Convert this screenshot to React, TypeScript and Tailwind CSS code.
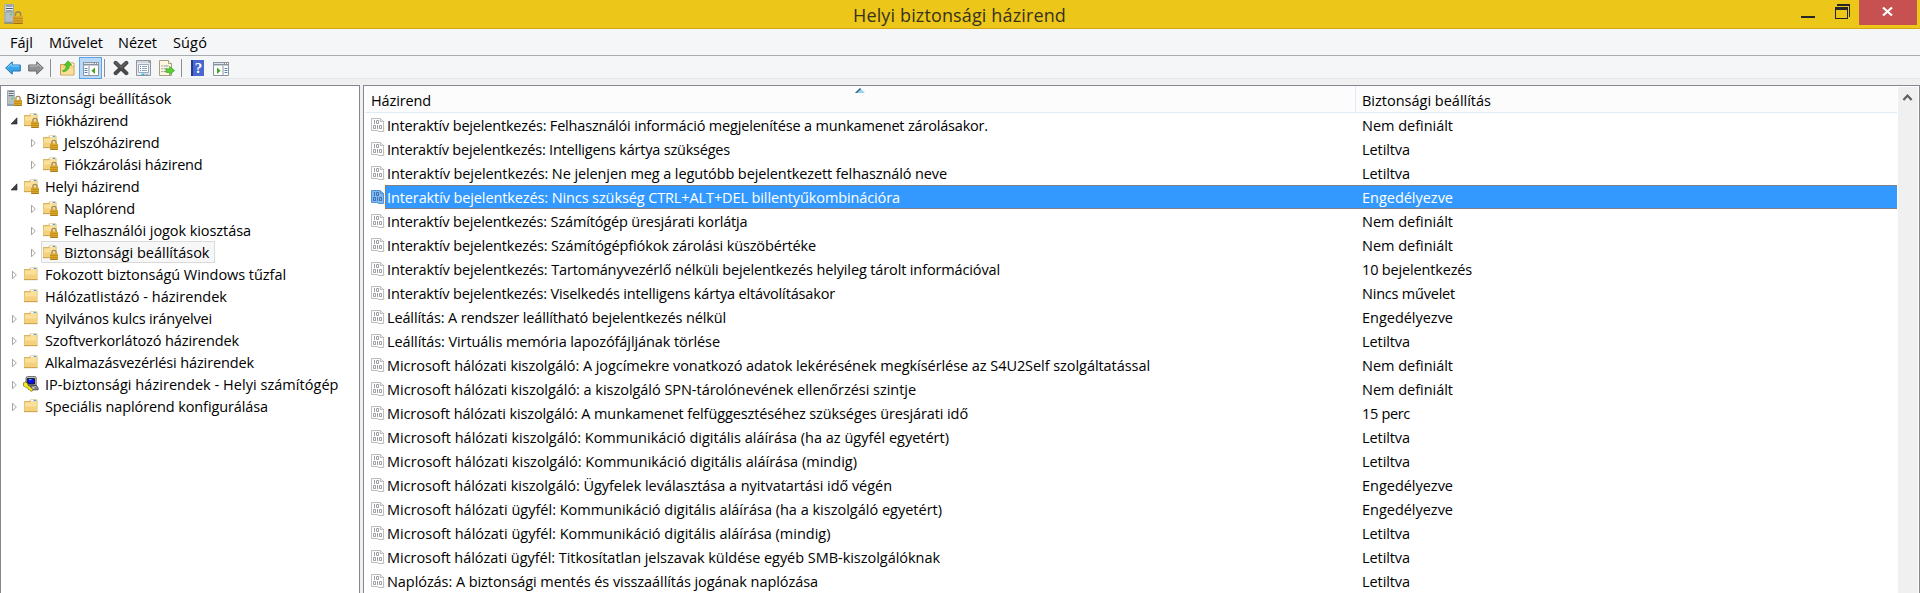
import { useLayoutEffect, useRef } from "react";

/* Text run whose tracking is adjusted so that it occupies the given width. */
function Fit({ text, w, className = "" }: { text: string; w: number; className?: string }) {
  const ref = useRef<HTMLSpanElement>(null);
  useLayoutEffect(() => {
    const el = ref.current;
    if (!el) return;
    el.style.letterSpacing = "0px";
    const natural = el.getBoundingClientRect().width;
    el.style.letterSpacing = `${(w - natural) / text.length}px`;
  }, [text, w]);
  return (
    <span ref={ref} className={`inline-block whitespace-pre ${className}`}>
      {text}
    </span>
  );
}

function Lock() {
  return (
    <g>
      <path d="M9.9 10V8.4a2.1 2.1 0 0 1 4.2 0V10" fill="none" stroke="#a08a58" strokeWidth="1.3" />
      <rect x="8" y="9.8" width="8" height="6" rx=".5" fill="#dba62c" />
      <path d="M8 11.5h8M8 13.5h8" stroke="#b98714" strokeWidth=".7" />
      <path d="M8.3 15.5h7.4" stroke="#94690e" strokeWidth=".8" />
    </g>
  );
}

function ServerIcon({ size }: { size: number }) {
  return (
    <svg width={size} height={size} viewBox="0 0 16 16">
      <path d="M1 .5 2.2 0H8l.8.6V15.2H1z" fill="#9da9b4" />
      <path d="M2 .8h6v5.6H2z" fill="#e8eef2" />
      <path d="M2.4 1.6h5.4M2.4 3.6h5.4M2.4 5.6h5.4" stroke="#4c5a66" strokeWidth=".9" />
      <path d="M2 7h6v7H2z" fill="#b4bfc8" />
      <path d="M1 15.3h7.6" stroke="#6d7a86" strokeWidth=".8" />
      <rect x="5.8" y="7.8" width="1.5" height="1.3" fill="#5bd02d" />
      <Lock />
    </svg>
  );
}

function FolderIcon({ lock = false }: { lock?: boolean }) {
  return (
    <svg width="16" height="16" viewBox="0 0 16 16">
      <path d="M1 3h5.4l1-1.6h6.4l.7.8V14H1z" fill="#dcb562" />
      <path d="M8 2h5.4v1.4H7.4z" fill="#fff" />
      <path d="M10.6 2.4h2.4" stroke="#3d9ae8" strokeWidth="1" />
      <path d="M1.7 4.2h5.9l1-.8h5.2v9.9H1.7z" fill="#fbe09a" />
      <path d="M1.7 8.5h12.1v4.8H1.7z" fill="#f5d17d" />
      <path d="M1 13.7h13.4" stroke="#c0953f" strokeWidth=".8" />
      {lock && <Lock />}
    </svg>
  );
}

function IpIcon() {
  return (
    <svg width="16" height="16" viewBox="0 0 16 16">
      <path d="M3 1.5 4.5.4H12l1.2 1v8H3z" fill="#c4c4c4" stroke="#333" strokeWidth=".7" />
      <path d="M4.3 2.6h7.2V8H4.3z" fill="#0a14e0" stroke="#111" strokeWidth=".9" />
      <path d="M6 3.6h2.5" stroke="#5ad5ff" strokeWidth=".9" />
      <path d="m7.5 10 6-.5 1.6 2.6v1.7H9z" fill="#bbb" stroke="#222" strokeWidth=".8" />
      <path d="M11.5 12h2.4" stroke="#222" strokeWidth=".8" />
      <path d="M.4 6.8 2.6 6l2.2 1.6.2 1.8 5 3.8-.5 1.6-1.6.6-1-1.5-1.5-.3-.7-1.5-1.8-.6-1-.9-1.4-.6z" fill="#f6ec1c" stroke="#3d3900" strokeWidth=".5" />
    </svg>
  );
}

function BinaryIcon({ active }: { active: boolean }) {
  return (
    <svg width="13" height="14" viewBox="0 0 13 14" className="shrink-0">
      <path
        d="M.5.5h8.5l3.5 3v10h-5l-1.5-1H.5z"
        fill={active ? "#7db9f5" : "#fff"}
        stroke={active ? "#5593d3" : "#bdbdbf"}
      />
      <path d="M9.5.8v2.7h3" fill="none" stroke={active ? "#5593d3" : "#bdbdbf"} />
      <g fill="none" stroke={active ? "#3f6fae" : "#9c9ca2"}>
        <path d="M3.5 2v4" />
        <path d="M5.5 2.5h2v3h-2z" />
        <path d="M2.5 7.5h2v3h-2z" />
        <path d="M6.5 7v4" />
        <path d="M8.5 7.5h2v3h-2z" />
      </g>
    </svg>
  );
}

type Node = { level: number; text: string; w: number; arrow?: "open" | "closed"; icon: "server" | "lock" | "folder" | "ip"; selected?: boolean };

const tree: Node[] = [
  { level: 0, text: "Biztonsági beállítások", w: 145.5, icon: "server" },
  { level: 1, text: "Fiókházirend", w: 83, arrow: "open", icon: "lock" },
  { level: 2, text: "Jelszóházirend", w: 95.5, arrow: "closed", icon: "lock" },
  { level: 2, text: "Fiókzárolási házirend", w: 138.5, arrow: "closed", icon: "lock" },
  { level: 1, text: "Helyi házirend", w: 94.5, arrow: "open", icon: "lock" },
  { level: 2, text: "Naplórend", w: 71, arrow: "closed", icon: "lock" },
  { level: 2, text: "Felhasználói jogok kiosztása", w: 187, arrow: "closed", icon: "lock" },
  { level: 2, text: "Biztonsági beállítások", w: 145.5, arrow: "closed", icon: "lock", selected: true },
  { level: 1, text: "Fokozott biztonságú Windows tűzfal", w: 241, arrow: "closed", icon: "folder" },
  { level: 1, text: "Hálózatlistázó - házirendek", w: 182, icon: "folder" },
  { level: 1, text: "Nyilvános kulcs irányelvei", w: 167, arrow: "closed", icon: "folder" },
  { level: 1, text: "Szoftverkorlátozó házirendek", w: 194, arrow: "closed", icon: "folder" },
  { level: 1, text: "Alkalmazásvezérlési házirendek", w: 209, arrow: "closed", icon: "folder" },
  { level: 1, text: "IP-biztonsági házirendek - Helyi számítógép", w: 293.5, arrow: "closed", icon: "ip" },
  { level: 1, text: "Speciális naplórend konfigurálása", w: 223, arrow: "closed", icon: "folder" },
];

const indent = ["pl-0", "pl-[9px]", "pl-[28px]"];

const valueWidths: Record<string, number> = {
  "Nem definiált": 91,
  Letiltva: 48,
  Engedélyezve: 91,
  "10 bejelentkezés": 110,
  "Nincs művelet": 93,
  "15 perc": 48,
};

const policies: [string, number, string][] = [
  ["Interaktív bejelentkezés: Felhasználói információ megjelenítése a munkamenet zárolásakor.", 601, "Nem definiált"],
  ["Interaktív bejelentkezés: Intelligens kártya szükséges", 343, "Letiltva"],
  ["Interaktív bejelentkezés: Ne jelenjen meg a legutóbb bejelentkezett felhasználó neve", 560, "Letiltva"],
  ["Interaktív bejelentkezés: Nincs szükség CTRL+ALT+DEL billentyűkombinációra", 513, "Engedélyezve"],
  ["Interaktív bejelentkezés: Számítógép üresjárati korlátja", 360.5, "Nem definiált"],
  ["Interaktív bejelentkezés: Számítógépfiókok zárolási küszöbértéke", 429, "Nem definiált"],
  ["Interaktív bejelentkezés: Tartományvezérlő nélküli bejelentkezés helyileg tárolt információval", 613, "10 bejelentkezés"],
  ["Interaktív bejelentkezés: Viselkedés intelligens kártya eltávolításakor", 448, "Nincs művelet"],
  ["Leállítás: A rendszer leállítható bejelentkezés nélkül", 339, "Engedélyezve"],
  ["Leállítás: Virtuális memória lapozófájljának törlése", 333, "Letiltva"],
  ["Microsoft hálózati kiszolgáló: A jogcímekre vonatkozó adatok lekérésének megkísérlése az S4U2Self szolgáltatással", 763, "Nem definiált"],
  ["Microsoft hálózati kiszolgáló: a kiszolgáló SPN-tárolónevének ellenőrzési szintje", 529, "Nem definiált"],
  ["Microsoft hálózati kiszolgáló: A munkamenet felfüggesztéséhez szükséges üresjárati idő", 581, "15 perc"],
  ["Microsoft hálózati kiszolgáló: Kommunikáció digitális aláírása (ha az ügyfél egyetért)", 562, "Letiltva"],
  ["Microsoft hálózati kiszolgáló: Kommunikáció digitális aláírása (mindig)", 470, "Letiltva"],
  ["Microsoft hálózati kiszolgáló: Ügyfelek leválasztása a nyitvatartási idő végén", 505, "Engedélyezve"],
  ["Microsoft hálózati ügyfél: Kommunikáció digitális aláírása (ha a kiszolgáló egyetért)", 555, "Engedélyezve"],
  ["Microsoft hálózati ügyfél: Kommunikáció digitális aláírása (mindig)", 443.5, "Letiltva"],
  ["Microsoft hálózati ügyfél: Titkosítatlan jelszavak küldése egyéb SMB-kiszolgálóknak", 553, "Letiltva"],
  ["Naplózás: A biztonsági mentés és visszaállítás jogának naplózása", 431, "Letiltva"],
];

function TitleBar() {
  return (
    <header className="flex h-[29px] shrink-0 items-start border-b border-[#d1a516] bg-[#edc61a]">
      <div className="w-[105px] pt-[4px] pl-[3px]">
        <ServerIcon size={20} />
      </div>
      <h1 className="flex-1 pl-[13px] text-center text-[18px] leading-[31px] text-[#38331a]">
        <Fit text="Helyi biztonsági házirend" w={213} />
      </h1>
      <div className="flex h-[25px] pr-[3px]">
        <svg width="58" height="25">
          <path d="M0 16h14v2H0z" fill="#262626" />
          <path d="M36 4h13v13h-1V6H36z" fill="#262626" />
          <path d="M34 7h13v12H34zM35 10v8h11v-8z" fillRule="evenodd" fill="#262626" />
        </svg>
        <div className="h-[25px] w-[58px] bg-[#c75050]">
          <svg width="58" height="25">
            <path d="m24 7.5 9 8M33 7.5l-9 8" stroke="#fff" strokeWidth="2.2" />
          </svg>
        </div>
      </div>
    </header>
  );
}

function MenuBar() {
  return (
    <nav className="flex h-[27px] shrink-0 items-center border-b border-[#a9abae] bg-[#f5f6f7] pt-[2px] pl-[10px]">
      <div className="w-[39px]"><Fit text="Fájl" w={23} /></div>
      <div className="w-[69px]"><Fit text="Művelet" w={54} /></div>
      <div className="w-[55px]"><Fit text="Nézet" w={39} /></div>
      <div><Fit text="Súgó" w={34} /></div>
    </nav>
  );
}

function Separator({ className }: { className: string }) {
  return <div className={`h-[18px] w-px bg-[#8c8e91] ${className}`} />;
}

function WindowGlyph({ flip = false }: { flip?: boolean }) {
  return (
    <svg width="16" height="14" viewBox="0 0 16 14">
      <path d="M.5.5h15v13H.5z" fill="#fff" stroke="#8d949e" />
      <path d="M0 0h16v4H0z" fill="#8b95a2" />
      <path d="M1 1.5h10" stroke="#dfe5ec" />
      <path d="M12 1.5h1M14 1.5h1" stroke="#fff" />
      <path d="M1 3.5h14" stroke="#c7ced6" />
      {flip ? (
        <>
          <path d="M10 4v9.5" stroke="#8d949e" />
          <path d="M11.5 6.5h3M11.5 8.5h3M11.5 10.5h3" stroke="#5184c4" />
          <path d="m4 5.5 3.6 3.2L4 12z" fill="#41a51f" />
        </>
      ) : (
        <>
          <path d="M6 4v9.5" stroke="#8d949e" />
          <path d="M1.5 6.5h3M1.5 8.5h3M1.5 10.5h3" stroke="#5184c4" />
          <path d="M12 5.5 8.4 8.7 12 12z" fill="#41a51f" />
        </>
      )}
    </svg>
  );
}

function Arrow({ back = false }: { back?: boolean }) {
  return (
    <svg width="16" height="14" viewBox="0 0 16 14" className={back ? "" : "-scale-x-100"}>
      <path
        d="M.7 7 7.2.8V4h8.1v6H7.2v3.2z"
        fill={back ? "#39a6e8" : "#8f9194"}
        stroke={back ? "#2473b5" : "#66686b"}
        strokeLinejoin="round"
      />
      <path d="M2.6 6.6 6.3 3v2h8" fill="none" stroke={back ? "#8ddcff" : "#bcbec0"} />
    </svg>
  );
}

function ToolBar() {
  return (
    <div className="flex h-[23px] shrink-0 items-center border-b border-[#e5e7eb] bg-[#f5f6f7] pt-[2px] pl-[5px]">
      <Arrow back />
      <div className="ml-[7px]"><Arrow /></div>
      <Separator className="ml-[6px]" />
      <svg width="15" height="16" viewBox="0 0 15 16" className="ml-[9px]">
        <path d="M.5 4.5h5l1-1.5h7.5v12H.5z" fill="#f6d585" stroke="#c69f55" />
        <path d="M1.3 8.5h12v6h-12z" fill="#fadf9b" />
        <path d="M9 3.6h4.6v1.6H9z" fill="#fff" />
        <path d="M2.5 10.5C5 10 6.3 8 6.3 5.2H4.2L8 .8l3.8 4.4H9.4c0 3.7-2.7 6.4-6.3 6.6z" fill="#56c62e" stroke="#3b9c1d" strokeWidth=".6" />
      </svg>
      <div className="ml-[4px] flex h-[22px] w-[23px] shrink-0 items-center justify-center border border-[#5ea1e6] bg-[#b9d9f8] pt-px">
        <WindowGlyph />
      </div>
      <Separator className="ml-[2px]" />
      <svg width="16" height="16" viewBox="0 0 16 16" className="ml-[8px]">
        <path d="m2.6 2.8 10.8 10.4M13.4 2.8 2.6 13.2" stroke="#4a4a4a" strokeWidth="4" strokeLinecap="round" />
        <path d="m2.6 2.4 5.4 5 5.4-5" stroke="#777" strokeWidth="1" fill="none" />
      </svg>
      <svg width="15" height="16" viewBox="0 0 15 16" className="ml-[7px]">
        <path d="M.5.5h14v15H.5z" fill="#e9edf1" stroke="#8e959d" />
        <path d="M1 2h10.5" stroke="#b4bbc3" />
        <path d="M12 2h2" stroke="#5c6670" />
        <path d="M2.5 4.5h10v8h-10z" fill="#fff" stroke="#9aa9bc" />
        <path d="M4 6.5h1M4 8.5h1M4 10.5h1" stroke="#3d80c8" />
        <path d="M6 6.5h5M6 8.5h5M6 10.5h5" stroke="#8aa0b8" />
        <path d="M5.5 14.3h3" stroke="#23b8f0" strokeWidth="1.5" />
        <path d="M9.5 14.3h3" stroke="#a9b2bc" strokeWidth="1.2" />
      </svg>
      <svg width="16" height="16" viewBox="0 0 16 16" className="ml-[8px]">
        <path d="M.5.5h9l3 3v12H.5z" fill="#fdf8e2" stroke="#a99f80" />
        <path d="M9.5.5v3h3" fill="#fff" stroke="#a99f80" />
        <path d="M2.5 6h1M2.5 8.8h1M2.5 11.6h1" stroke="#6d5d42" />
        <path d="M4.5 6h5M4.5 8.8h3M4.5 11.6h3" stroke="#8b94b3" />
        <path d="M7 8.8h3.6V6.4l5 4.2-5 4.2v-2.4H7z" fill="#5dcf35" stroke="#38971a" strokeWidth=".6" />
      </svg>
      <Separator className="ml-[6px]" />
      <div className="ml-[9px] flex h-4 w-[13px] items-center justify-center border-l-2 border-[#26398f] bg-[#4868cf] font-['Liberation_Serif',serif] text-[15px] leading-4 font-bold text-white">
        ?
      </div>
      <div className="ml-[9px] pt-[2px]"><WindowGlyph flip /></div>
    </div>
  );
}

function TreePane() {
  return (
    <aside className="w-[360px] shrink-0 border border-b-0 border-[#828790] bg-white pt-px">
      {tree.map((n, i) => (
        <div key={i} className={`flex h-[22px] items-center ${indent[n.level]}`}>
          {n.level > 0 && (
            <div className="flex w-[12px] shrink-0 items-center pt-px">
              {n.arrow === "open" && (
                <svg width="8" height="8"><path d="M7 .8V7H1z" fill="#404040" stroke="#222" strokeWidth=".6" /></svg>
              )}
              {n.arrow === "closed" && (
                <svg width="8" height="10"><path d="M2.5 1.2 6.3 5 2.5 8.8z" fill="#fff" stroke="#a3a3a3" /></svg>
              )}
            </div>
          )}
          <div
            className={`flex h-[22px] items-center border pr-[4px] ${n.level === 0 ? "pl-[4px]" : ""} ${
              n.selected ? "border-[#dadada] bg-[#f7f7f7]" : "border-transparent"
            }`}
          >
            <div className={n.level === 0 ? "w-[20px]" : "w-[22px]"}>
              {n.icon === "server" && <ServerIcon size={16} />}
              {n.icon === "lock" && <FolderIcon lock />}
              {n.icon === "folder" && <FolderIcon />}
              {n.icon === "ip" && <IpIcon />}
            </div>
            <Fit text={n.text} w={n.w} className="pt-[2px]" />
          </div>
        </div>
      ))}
    </aside>
  );
}

function PolicyList() {
  return (
    <main className="flex min-w-0 flex-1 border border-b-0 border-[#828790] bg-white">
      <div className="flex w-[1533px] shrink-0 flex-col pl-px">
        <div className="relative flex h-[27px] shrink-0 border-b border-[#e0ebf8] bg-[#fcfcfc]">
          <div className="w-[991px] border-r border-[#e0ebf8] pt-[5px] pl-[6px]">
            <Fit text="Házirend" w={60} />
          </div>
          <div className="pt-[5px] pl-[6px]">
            <Fit text="Biztonsági beállítás" w={129} />
          </div>
          <svg width="10" height="5" className="absolute top-[2px] left-[490px]">
            <path d="M5 0 10 5H0z" fill="#9bd0ea" />
            <path d="M5 0 0 5h2l4-4z" fill="#356584" />
          </svg>
        </div>
        {policies.map(([text, w, value], i) => {
          const active = i === 3;
          return (
            <div key={i} className="flex h-6 shrink-0 items-center pl-[6px]">
              <BinaryIcon active={active} />
              <div
                className={`ml-px flex h-6 flex-1 items-center border-y border-l border-dotted pt-[2px] pl-px ${
                  active ? "border-[#c8691a] bg-[#3399ff] text-white" : "border-transparent"
                }`}
              >
                <div className="w-[975px]">
                  <Fit text={text} w={w} />
                </div>
                <Fit text={value} w={valueWidths[value]} />
              </div>
            </div>
          );
        })}
      </div>
      <div className="mt-px ml-px w-[20px] shrink-0 bg-[#f0f0f0]">
        <svg width="20" height="20">
          <path d="M5.4 13 9.5 8.6l4.1 4.4" fill="none" stroke="#5c5c5c" strokeWidth="2.2" />
        </svg>
      </div>
    </main>
  );
}

export default function App() {
  return (
    <div className="flex h-[593px] w-[1920px] flex-col overflow-hidden bg-[#f0f0f0] font-['Open_Sans','Noto_Sans',sans-serif] text-[14.5px] leading-5 text-black">
      <TitleBar />
      <MenuBar />
      <ToolBar />
      <div className="mt-[6px] flex min-h-0 flex-1 gap-[3px]">
        <TreePane />
        <PolicyList />
      </div>
    </div>
  );
}
